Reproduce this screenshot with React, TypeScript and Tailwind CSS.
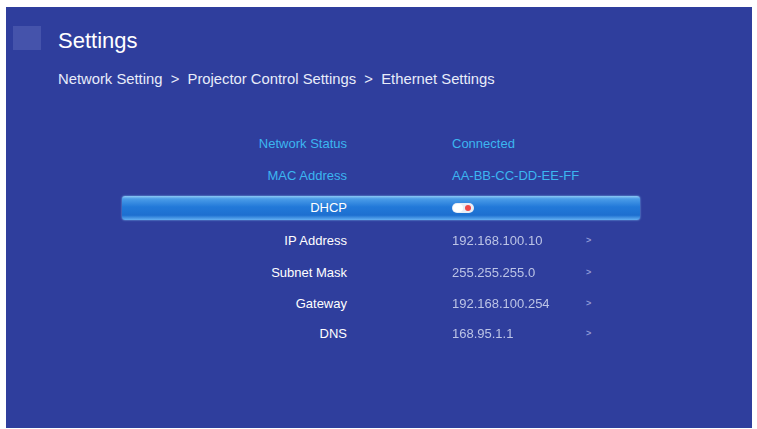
const rows = [
  { label: "Network Status", value: "Connected", tone: "info", h: "h-[32px]" },
  { label: "MAC Address", value: "AA-BB-CC-DD-EE-FF", tone: "info", h: "h-[32px]" },
  { label: "DHCP", value: "", tone: "toggle", h: "h-[24px]" },
  { label: "IP Address", value: "192.168.100.10", tone: "edit", h: "h-[33px]" },
  { label: "Subnet Mask", value: "255.255.255.0", tone: "edit", h: "h-[31px]" },
  { label: "Gateway", value: "192.168.100.254", tone: "edit", h: "h-[31px]" },
  { label: "DNS", value: "168.95.1.1", tone: "edit", h: "h-[30px]" },
];

function Toggle() {
  return (
    <div className="relative h-[10px] w-[22px] rounded-full bg-[#e9edf6]">
      <div className="absolute left-[1px] top-[1px] h-[8px] w-[10px] rounded-full bg-white" />
      <div className="absolute right-[3px] top-[2px] h-[6px] w-[6px] rounded-full bg-[#f04848]" />
    </div>
  );
}

export default function App() {
  return (
    <div
      className="h-[429px] w-[757px] overflow-hidden bg-white pl-[6px] pt-[7px]"
      style={{ fontFamily: '"Liberation Sans", Arial, sans-serif' }}
    >
      <div className="h-[421px] w-[746px] bg-[#2f3e9d] pt-[19px]">
        <div className="flex items-start">
          <div className="ml-[7px] h-[24px] w-[28px] bg-[#4553ab]" />
          <div className="ml-[17px] mt-[1px] text-[22px] leading-[28px] text-white">Settings</div>
        </div>

        <div className="ml-[52px] mt-[15px] text-[14.8px] leading-[18px] text-[#e8ecfa]">
          Network Setting &nbsp;&gt;&nbsp; Projector Control Settings &nbsp;&gt;&nbsp; Ethernet Settings
        </div>

        <div className="ml-[116px] mt-[40px] w-[518px]">
          {rows.map((row) => {
            const selected = row.tone === "toggle";
            return (
              <div
                key={row.label}
                className={
                  selected
                    ? "my-[4px] flex h-[24px] items-center rounded-[3px] bg-[linear-gradient(to_bottom,#8cc8f6_0%,#4a9ce8_12%,#2279d9_45%,#1d6fd0_80%,#63b0f2_100%)] shadow-[0_0_2px_#7fc0f5]"
                    : "flex items-center " + row.h
                }
              >
                <div
                  className={
                    "w-[225px] text-right text-[13px] " +
                    (row.tone === "info" ? "text-[#3cb6f0]" : "text-white")
                  }
                >
                  {row.label}
                </div>
                <div className="ml-[105px] flex w-[188px] items-center">
                  {selected ? (
                    <Toggle />
                  ) : (
                    <div
                      className={
                        "w-[134px] text-[13px] " +
                        (row.tone === "info" ? "text-[#3cb6f0]" : "text-[#bcc4e6] blur-[0.3px]")
                      }
                    >
                      {row.value}
                    </div>
                  )}
                  {row.tone === "edit" && (
                    <span className="text-[9px] font-bold text-[#8f9ad6]">&gt;</span>
                  )}
                </div>
              </div>
            );
          })}
        </div>
      </div>
    </div>
  );
}
